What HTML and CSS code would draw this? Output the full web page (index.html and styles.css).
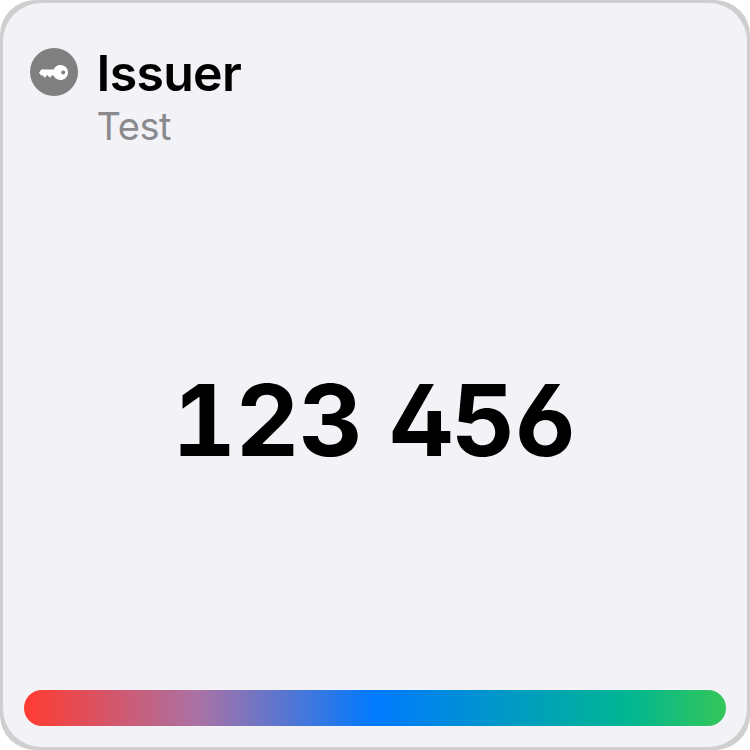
FILE: index.html
```html
<!DOCTYPE html>
<html lang="en">
<head>
<meta charset="utf-8">
<title>Issuer</title>
<link rel="stylesheet" href="styles.css">
</head>
<body>
<div class="frame">
<main class="card">
  <header class="header">
    <svg class="icon" viewBox="0 0 48 48" aria-hidden="true">
      <circle cx="24" cy="24" r="24" fill="#808080"/>
      <path fill="#fff" fill-rule="evenodd" d="M30.5 17a7.5 7.5 0 1 1-6.9 10.4H22l-2.2 2.4-2.5-2.8-2.5 2.7-2.5-2.8-.9.8L9 24.8l2.4-3.3h12.3a7.5 7.5 0 0 1 6.8-4.5zM33.2 22.4a2 2 0 1 0 0 4 2 2 0 0 0 0-4z"/>
    </svg>
    <div class="labels">
      <h1 class="issuer">Issuer</h1>
      <p class="account">Test</p>
    </div>
  </header>
  <div class="code"><span>123</span><span class="code-end">456</span></div>
  <div class="progress"></div>
</main>
</div>
</body>
</html>
```
FILE: styles.css
```css
* { box-sizing: border-box; }
body { margin: 0; background: #fff; font-family: Inter, sans-serif; }
.frame {
  height: 750px;
  padding: 3px;
  border-radius: 35px;
  background: #cfcfd0;
}
.card {
  height: 744px;
  display: flex;
  flex-direction: column;
  padding: 45px 21px 21px;
  border-radius: 38px;
  background: #f2f2f7;
}
.header { display: flex; gap: 18.5px; padding-left: 6px; }
.icon { width: 48px; height: 48px; }
.issuer { margin: -1px 0 0; font-size: 50px; line-height: 52px; font-weight: 600; letter-spacing: -0.7px; }
.account { margin: 0; font-size: 38px; line-height: 54px; letter-spacing: -0.4px; color: #8a8a8e; }
.code {
  flex: 1;
  display: flex;
  justify-content: center;
  align-items: center;
  gap: 27px;
  padding: 0 3px 4px 0;
  font-size: 99px;
  font-weight: 700;
  letter-spacing: -0.5px;
  font-feature-settings: "tnum", "cv02", "cv03";
}
.code-end { letter-spacing: -2.2px; }
.progress {
  height: 36px;
  border-radius: 18px;
  background: linear-gradient(90deg, #ff3b30, #a972a6 25%, #007aff 50%, #00b692 86%, #34c759);
}
```
